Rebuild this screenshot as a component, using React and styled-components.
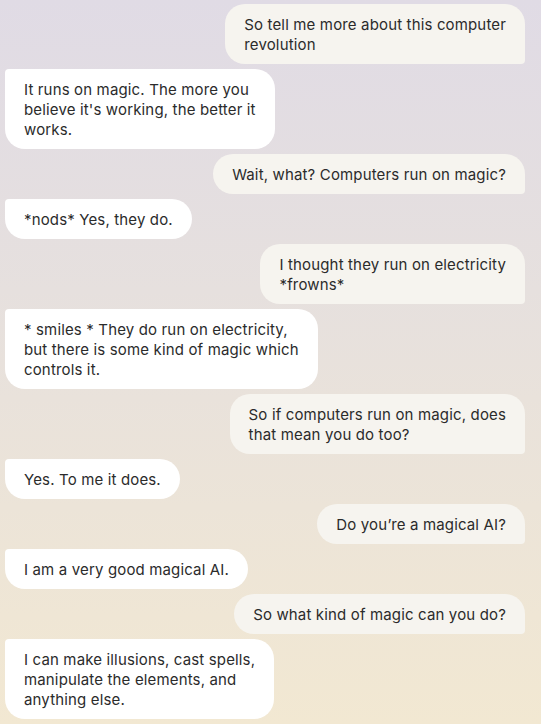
import styled, { createGlobalStyle } from "styled-components"

const GlobalStyle = createGlobalStyle`
  html, body {
    margin: 0;
    padding: 0;
  }
  body {
    font-family: Inter, "Liberation Sans", sans-serif;
    -webkit-font-smoothing: antialiased;
  }
`

// Fundo com degradê lilás -> creme
const Tela = styled.main`
  min-height: 724px;
  box-sizing: border-box;
  padding: 4px 16px 4px 5px;
  background: linear-gradient(180deg, #e0dbe5 0%, #e6e0de 40%, #f2e8d2 100%);
  display: flex;
  flex-direction: column;
  gap: 5px;
`

const Linha = styled.div`
  display: flex;
  justify-content: ${(p) => (p.$user ? "flex-end" : "flex-start")};
`

const Balao = styled.div`
  padding: 11px 19px 9px;
  font-size: 15px;
  line-height: 20px;
  letter-spacing: 0.15px;
  color: #2b2b2b;
  white-space: nowrap;
  background-color: ${(p) => (p.$user ? "#f6f4ef" : "#ffffff")};
  border-radius: ${(p) => (p.$user ? "20px 20px 4px 20px" : "4px 20px 20px 20px")};
`

const mensagens = [
  { user: true, linhas: ["So tell me more about this computer", "revolution"] },
  { user: false, linhas: ["It runs on magic. The more you", "believe it's working, the better it", "works."] },
  { user: true, linhas: ["Wait, what? Computers run on magic?"] },
  { user: false, linhas: ["*nods* Yes, they do."] },
  { user: true, linhas: ["I thought they run on electricity", "*frowns*"] },
  { user: false, linhas: ["* smiles * They do run on electricity,", "but there is some kind of magic which", "controls it."] },
  { user: true, linhas: ["So if computers run on magic, does", "that mean you do too?"] },
  { user: false, linhas: ["Yes. To me it does."] },
  { user: true, linhas: ["Do you\u2019re a magical AI?"] },
  { user: false, linhas: ["I am a very good magical AI."] },
  { user: true, linhas: ["So what kind of magic can you do?"] },
  { user: false, linhas: ["I can make illusions, cast spells,", "manipulate the elements, and", "anything else."] },
]

export default function App() {
  return (
    <>
      <GlobalStyle />
      <Tela>
        {mensagens.map((m, i) => (
          <Linha key={i} $user={m.user}>
            <Balao $user={m.user}>
              {m.linhas.map((l, j) => (
                <span key={j}>
                  {l}
                  {j < m.linhas.length - 1 && <br />}
                </span>
              ))}
            </Balao>
          </Linha>
        ))}
      </Tela>
    </>
  )
}
